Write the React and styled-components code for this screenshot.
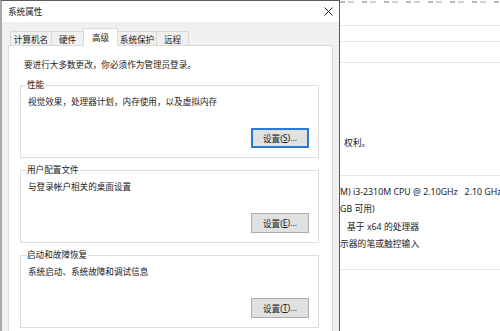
import React from 'react'
import styled, { createGlobalStyle } from 'styled-components'

const GlobalStyle = createGlobalStyle`
  body {
    margin: 0;
    background: #fff;
    font-family: "Noto Sans", "Noto Sans CJK SC", sans-serif;
  }
`

const tabs = [
  { label: '计算机名', width: 42 },
  { label: '硬件', width: 33 },
  { label: '高级', width: 35, active: true },
  { label: '系统保护', width: 40 },
  { label: '远程', width: 33 },
]

const groups = [
  { title: '性能', text: '视觉效果，处理器计划，内存使用，以及虚拟内存', key: 'S', focused: true },
  { title: '用户配置文件', text: '与登录帐户相关的桌面设置', key: 'E' },
  { title: '启动和故障恢复', text: '系统启动、系统故障和调试信息', key: 'T' },
]

const App = () => {
  return (
    <Screen>
      <GlobalStyle />
      <Dialog>
        <TitleBar>
          <span>系统属性</span>
          <svg width="9" height="9" viewBox="0 0 9 9">
            <path d="M0.5 0.5 L8.5 8.5 M8.5 0.5 L0.5 8.5" stroke="#222" strokeWidth="1" />
          </svg>
        </TitleBar>
        <Body>
          <TabRow>
            {tabs.map((t) => (
              <Tab key={t.label} width={t.width} active={t.active}>{t.label}</Tab>
            ))}
          </TabRow>
          <Panel>
            <Heading>要进行大多数更改，你必须作为管理员登录。</Heading>
            {groups.map((g) => (
              <Group key={g.title}>
                <Legend>{g.title}</Legend>
                <GroupText>{g.text}</GroupText>
                <Button focused={g.focused}>
                  设置(<u>{g.key}</u>)...
                </Button>
              </Group>
            ))}
          </Panel>
        </Body>
      </Dialog>

      <Behind>
        <TopCut />
        <Rule mt={22} />
        <Rule mt={15} />
        <Rule mt={20} />
        <InfoLine mt={74} shift={4}>权利。</InfoLine>
        <Rule mt={26} />
        <InfoLine mt={10} shift={0}>{'M) i3-2310M CPU @ 2.10GHz   2.10 GHz'}</InfoLine>
        <InfoLine mt={5} shift={0}>GB 可用)</InfoLine>
        <InfoLine mt={6} shift={7}>基于 x64 的处理器</InfoLine>
        <InfoLine mt={5} shift={0}>示器的笔或触控输入</InfoLine>
        <Rule mt={19} />
      </Behind>
    </Screen>
  )
}

const Screen = styled.div`
  display: flex;
  width: 500px;
  height: 331px;
  overflow: hidden;
  background: #fff;
`

const Dialog = styled.div`
  box-sizing: border-box;
  width: 340px;
  height: 331px;
  flex-shrink: 0;
  display: flex;
  flex-direction: column;
  border-top: 1px solid #5c5c5c;
  border-left: 2px solid #a8a8a8;
  border-right: 1px solid #555;
  background: #f0f0f0;
`

const TitleBar = styled.div`
  height: 21px;
  display: flex;
  align-items: center;
  justify-content: space-between;
  padding: 0 6px 1px 6px;
  box-sizing: border-box;
  background: #fff;
  font-size: 8.6px;
  color: #1a1a1a;
`

const Body = styled.div`
  flex: 1;
  display: flex;
  flex-direction: column;
  padding: 6px 6px 0 6px;
  min-height: 0;
`

const TabRow = styled.div`
  display: flex;
  align-items: flex-end;
  height: 18px;
  padding-left: 2px;
  margin-bottom: -1px;
  position: relative;
  z-index: 1;
`

const Tab = styled.div`
  box-sizing: border-box;
  width: ${(p) => p.width}px;
  height: ${(p) => (p.active ? 18 : 15)}px;
  display: flex;
  align-items: center;
  justify-content: center;
  font-size: 8.6px;
  color: #1a1a1a;
  background: ${(p) => (p.active ? '#fff' : '#f0f0f0')};
  border: 1px solid #d9d9d9;
  border-bottom: ${(p) => (p.active ? 'none' : '1px solid #d9d9d9')};
  padding-top: ${(p) => (p.active ? 0 : 1)}px;
  margin-left: -1px;
  &:first-child {
    margin-left: 0;
  }
`

const Panel = styled.div`
  flex: 1;
  background: #fff;
  border: 1px solid #d9d9d9;
  border-bottom: none;
  padding: 13px 13px 0 11px;
`

const Heading = styled.div`
  font-size: 8.6px;
  line-height: 12px;
  color: #1a1a1a;
  padding-left: 4px;
  white-space: nowrap;
`

const Group = styled.div`
  position: relative;
  box-sizing: border-box;
  height: 73px;
  margin-top: 12px;
  border: 1px solid #dcdcdc;
  padding: 10px 9px 9px 7px;
  display: flex;
  flex-direction: column;
  &:nth-of-type(2) {
    margin-top: 14px;
  }
`

const Legend = styled.span`
  position: absolute;
  top: -7px;
  left: 5px;
  padding: 0 1px;
  background: #fff;
  font-size: 8.6px;
  line-height: 12px;
  color: #1a1a1a;
`

const GroupText = styled.div`
  font-size: 8.6px;
  line-height: 12px;
  color: #1a1a1a;
  white-space: nowrap;
`

const Button = styled.div`
  box-sizing: border-box;
  margin-top: auto;
  align-self: flex-end;
  width: 58px;
  height: 20px;
  display: flex;
  align-items: center;
  justify-content: center;
  font-size: 8.6px;
  color: #1a1a1a;
  background: #e1e1e1;
  border: ${(p) => (p.focused ? '2px solid #2a7bd1' : '1px solid #adadad')};
  u {
    text-underline-offset: 1px;
  }
`

const Behind = styled.div`
  flex: 1;
  min-width: 0;
  overflow: hidden;
  display: flex;
  flex-direction: column;
  background: #fff;
`

const TopCut = styled.div`
  height: 2px;
  flex-shrink: 0;
  margin-top: 1px;
  background: repeating-linear-gradient(90deg, #9a9a9a 0 5px, #fff 5px 8px, #bdbdbd 8px 14px, #fff 14px 22px);
  opacity: 0.7;
`

const Rule = styled.div`
  height: 1px;
  flex-shrink: 0;
  margin-top: ${(p) => p.mt}px;
  background: #e6e6e6;
`

const InfoLine = styled.div`
  margin-top: ${(p) => p.mt}px;
  margin-left: ${(p) => p.shift}px;
  font-size: 8.8px;
  line-height: 12px;
  color: #222;
  white-space: pre;
`

export default App
